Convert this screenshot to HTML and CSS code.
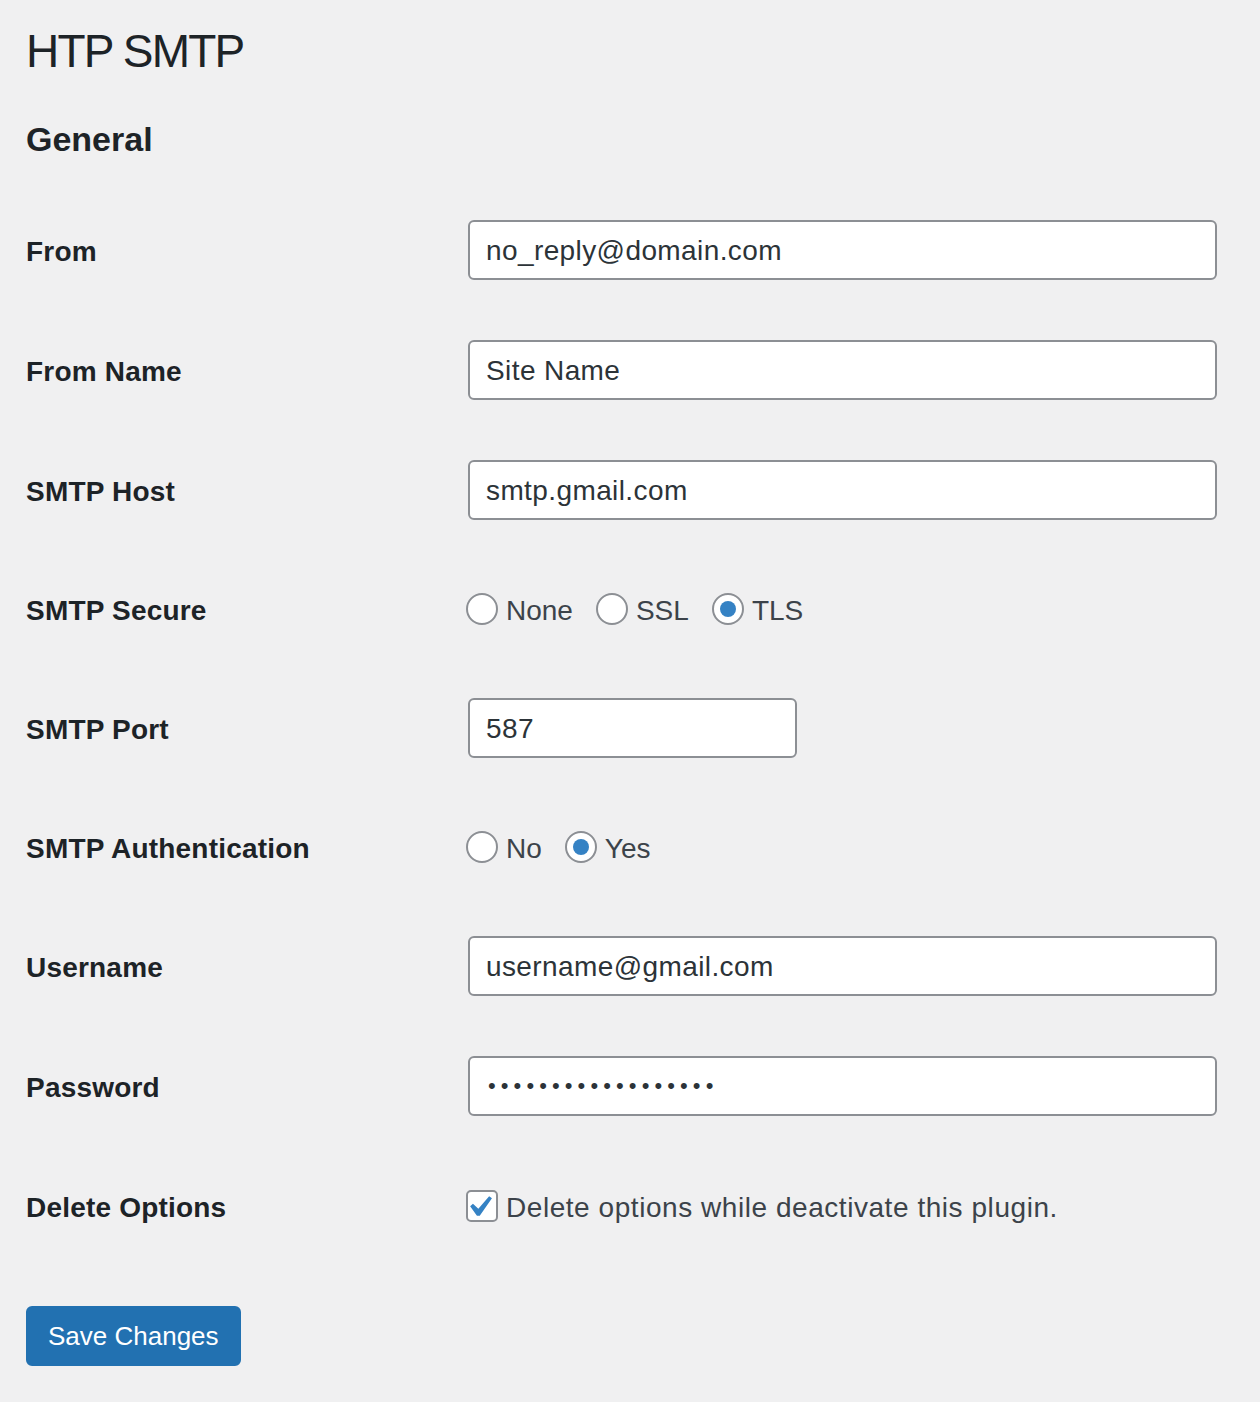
FILE: index.html
```html
<!DOCTYPE html>
<html lang="en">
<head>
<meta charset="utf-8">
<title>HTP SMTP</title>
<link rel="stylesheet" href="styles.css">
</head>
<body>
<div class="wrap">
  <h1 class="page-title">HTP SMTP</h1>
  <h2 class="section-title">General</h2>
  <form class="form-table">
    <div class="row">
      <div class="label">From</div>
      <div class="field"><input class="text-input" type="text" value="no_reply@domain.com"></div>
    </div>
    <div class="row">
      <div class="label">From Name</div>
      <div class="field"><input class="text-input" type="text" value="Site Name"></div>
    </div>
    <div class="row">
      <div class="label">SMTP Host</div>
      <div class="field"><input class="text-input" type="text" value="smtp.gmail.com"></div>
    </div>
    <div class="row row-choice">
      <div class="label">SMTP Secure</div>
      <div class="field choices">
        <label class="choice"><span class="radio"></span><span class="choice-text">None</span></label>
        <label class="choice"><span class="radio"></span><span class="choice-text">SSL</span></label>
        <label class="choice"><span class="radio checked"></span><span class="choice-text">TLS</span></label>
      </div>
    </div>
    <div class="row">
      <div class="label">SMTP Port</div>
      <div class="field"><input class="text-input port-input" type="text" value="587"></div>
    </div>
    <div class="row row-choice">
      <div class="label">SMTP Authentication</div>
      <div class="field choices">
        <label class="choice"><span class="radio"></span><span class="choice-text">No</span></label>
        <label class="choice"><span class="radio checked"></span><span class="choice-text">Yes</span></label>
      </div>
    </div>
    <div class="row">
      <div class="label">Username</div>
      <div class="field"><input class="text-input" type="text" value="username@gmail.com"></div>
    </div>
    <div class="row">
      <div class="label">Password</div>
      <div class="field"><input class="text-input password-input" type="password" value="abcdefghijklmnopqr"></div>
    </div>
    <div class="row">
      <div class="label">Delete Options</div>
      <div class="field choices">
        <label class="choice"><span class="checkbox"><svg class="check-icon" viewBox="0 0 20 20" width="42" height="42"><path d="M14.83 4.89l1.34.94-5.81 8.38H9.02L5.78 9.67l1.34-1.25 2.57 2.4z" fill="#3582c4"/></svg></span><span class="choice-text long-text">Delete options while deactivate this plugin.</span></label>
      </div>
    </div>
    <div class="submit">
      <button type="button" class="button-primary">Save Changes</button>
    </div>
  </form>
</div>
</body>
</html>
```

FILE: styles.css
```css
html, body {
  margin: 0;
  padding: 0;
  background: #f0f0f1;
}

body {
  font-family: "Liberation Sans", Arial, sans-serif;
  color: #1d2327;
  width: 1260px;
  height: 1402px;
  overflow: hidden;
}

.wrap {
  padding-left: 26px;
}

.page-title {
  margin: 21px 0 0;
  font-size: 46px;
  line-height: 60px;
  font-weight: 400;
  letter-spacing: -1.8px;
  color: #1d2327;
}

.section-title {
  margin: 38px 0 0;
  font-size: 34px;
  line-height: 40px;
  font-weight: 700;
  color: #1d2327;
}

.form-table {
  margin-top: 31px;
  display: flex;
  flex-direction: column;
}

.row {
  display: flex;
  align-items: center;
  height: 120px;
}

.row-choice {
  height: 118px;
}

.label {
  width: 440px;
  flex: none;
  padding-top: 4px;
  font-size: 28px;
  font-weight: 700;
  letter-spacing: 0.2px;
  color: #1d2327;
}

.field {
  flex: 1;
  display: flex;
  align-items: center;
}

.text-input {
  box-sizing: border-box;
  width: 749px;
  height: 60px;
  margin: 0 2px;
  padding: 2px 16px 0;
  border: 2px solid #8c8f94;
  border-radius: 6px;
  background: #fff;
  color: #2c3338;
  font-family: "Liberation Sans", Arial, sans-serif;
  font-size: 28px;
  letter-spacing: 0.4px;
  outline: none;
}

.port-input {
  width: 329px;
}

.password-input {
  padding-left: 18px;
  padding-top: 0;
  font-size: 22px;
  letter-spacing: 5.1px;
}

.choices {
  gap: 23px;
}

.choice {
  display: flex;
  align-items: center;
  font-size: 28px;
  color: #3c434a;
}

.choice-text {
  padding-top: 4px;
}

.long-text {
  letter-spacing: 0.55px;
}

.radio {
  box-sizing: border-box;
  width: 32px;
  height: 32px;
  margin-right: 8px;
  border: 2px solid #8c8f94;
  border-radius: 50%;
  background: #fff;
  display: flex;
  align-items: center;
  justify-content: center;
  flex: none;
}

.radio.checked::before {
  content: "";
  width: 16px;
  height: 16px;
  border-radius: 50%;
  background: #3582c4;
}

.checkbox {
  box-sizing: border-box;
  position: relative;
  width: 32px;
  height: 32px;
  margin-right: 8px;
  border: 2px solid #8c8f94;
  border-radius: 5px;
  background: #fff;
  flex: none;
}

.check-icon {
  position: absolute;
  left: -10px;
  top: -6px;
}

.submit {
  margin-top: 40px;
}

.button-primary {
  box-sizing: border-box;
  height: 60px;
  padding: 0 20px;
  border: 2px solid #2271b1;
  border-radius: 6px;
  background: #2271b1;
  color: #fff;
  font-family: "Liberation Sans", Arial, sans-serif;
  font-size: 26px;
  cursor: pointer;
}
```
